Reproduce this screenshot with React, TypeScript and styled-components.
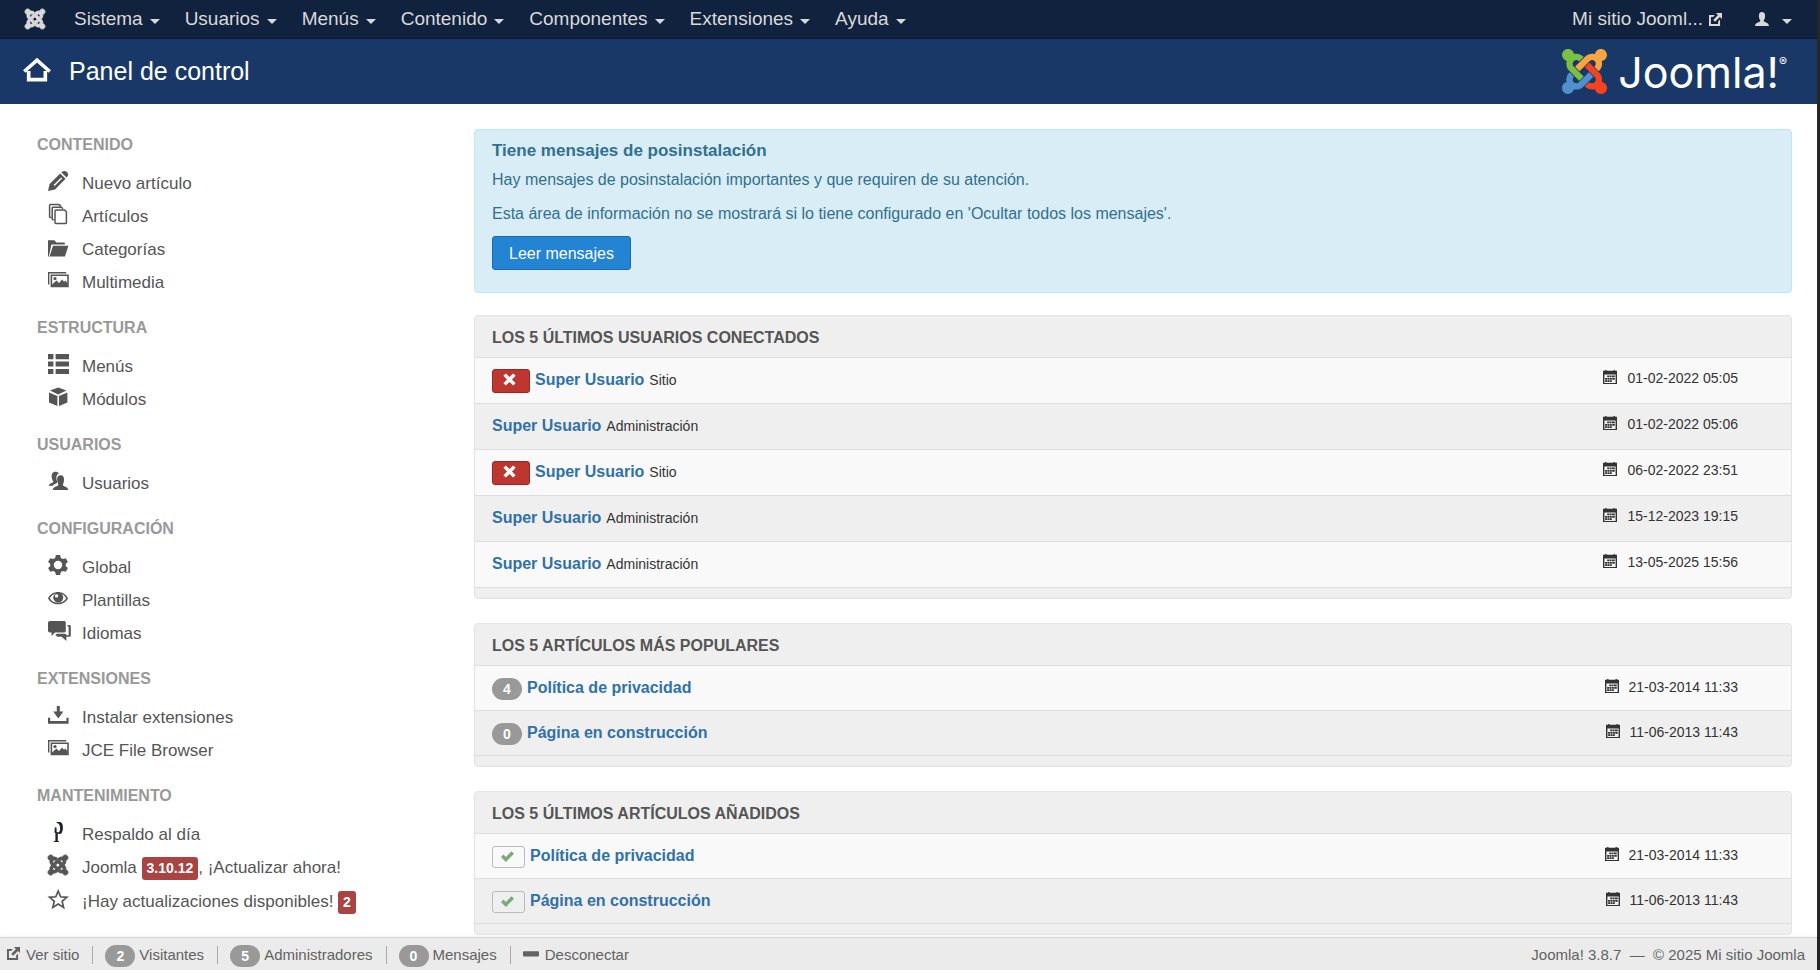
import React from "react";
import styled, { createGlobalStyle, css } from "styled-components";

const GlobalStyle = createGlobalStyle`
  *, *::before, *::after { box-sizing: border-box; }
  body {
    margin: 0;
    background: #fff;
    color: #333;
    font-family: "Liberation Sans", Arial, sans-serif;
    font-size: 16px;
    line-height: 22px;
  }
  a { text-decoration: none; }
  ul { list-style: none; margin: 0; padding: 0; }
`;

/* ---------- icons ---------- */

type IconName =
  | "pencil" | "copies" | "folder" | "images" | "list" | "cube" | "users" | "cog" | "eye"
  | "comments" | "download" | "akeeba" | "joomla" | "star" | "external" | "user" | "home"
  | "calendar" | "cross" | "check" | "minus";

const joomlaArms = {
  green:
    "M.6 92.1C.6 58.8 27.4 32 60.4 32c30 0 54.5 21.9 59.2 50.2 32.6-7.6 67.1.6 96.5 30l-44.3 44.3c-20.5-20.5-42.6-16.3-55.4-3.5-14.3 14.3-14.3 37.9 0 52.2l99.5 99.5-44 44.3c-87.7-87.2-49.7-49.7-99.8-99.7-26.8-26.5-35-64.8-24.8-98.9C20.4 144.6.6 120.7.6 92.1z",
  orange:
    "M130.1 208.5l44.3 44.3c10-10 89.7-89.7 99.7-99.8 14.3-14.3 37.6-14.3 51.9 0 12.8 12.8 17 35-3.5 55.4l44 44.3c31.2-31.2 38.5-67.6 28.9-101.2 29.2-4.1 51.9-29.2 51.9-59.5 0-33.2-26.8-60.1-59.8-60.1-30.3 0-55.4 22.5-59.5 51.6-33.8-9.9-71.7-1.5-98.3 25.1-18.3 19.1-71.1 71.5-99.6 99.9z",
  red:
    "M396.4 360.7c8.2-32.7-.9-68.5-26.3-93.9-11.8-12.2 5 4.7-99.5-99.7l-44.3 44.3 99.7 99.7c14.3 14.3 14.3 37.6 0 51.9-12.8 12.8-35 17-55.4-3.5l-44 44.3c27.6 30.2 68 38.8 102.7 28 5.5 27.4 29.7 48.1 58.9 48.1 33 0 59.8-26.8 59.8-60.1 0-30.2-22.5-55-51.6-59.1z",
  blue:
    "M312.1 307.6l-44-44.3c-87 86.4-50.4 50.4-99.7 99.8-14.3 14.3-37.6 14.3-51.9 0-13.1-13.4-16.9-35.3 3.2-55.4l-44-44.3c-30.2 30.2-38 65.2-29.5 98.3-26.7 6-46.2 29.9-46.2 58.2C0 453.2 26.8 480 59.8 480c28.6 0 52.5-19.8 58.6-46.7 32.7 8.2 68.5-.6 94.2-26 32.1-32 12.2-12.4 99.5-99.7z",
};

const Svg = styled.svg<{ $size: number }>`
  display: block;
  flex: none;
  width: ${(p) => p.$size}px;
  height: ${(p) => p.$size}px;
  fill: currentColor;
  overflow: visible;
`;

const shapes: Record<Exclude<IconName, "joomla">, React.ReactNode> = {
  pencil: (
    <>
      <path
        fillRule="evenodd"
        d="M0 20 L1.6 13 L12.2 2.4 L17.6 7.8 L7 18.4 Z M5.6 14 L6.6 15 L14.2 7.4 L13.2 6.4 Z"
      />
      <path d="M13.4 1.4 L14.4 .6 C16 -.6 17.6 -.2 18.9 1.1 C20.2 2.4 20.8 4.2 19.4 5.6 L18.6 6.6 Z" />
    </>
  ),
  copies: (
    <g fill="none" stroke="currentColor" strokeWidth="1.5">
      <path d="M3.4 13.4 H2.4 Q1.6 13.4 1.6 12.6 V1.4 Q1.6 .6 2.4 .6 H11 L13 2.4" />
      <path d="M5.8 15.8 H5 Q4.2 15.8 4.2 15 V4 Q4.2 3.2 5 3.2 H13.4 L15 4.8" />
      <path d="M8 6 H16.6 L18.4 7.8 V18.6 Q18.4 19.4 17.6 19.4 H7.8 Q7 19.4 7 18.6 V7 Q7 6 8 6 Z" />
    </g>
  ),
  folder: (
    <>
      <path d="M0 19.4 V3.2 H6.4 L8.4 5.4 H16.8 V7.4 H3.4 L.9 19.4 Z" />
      <path d="M1.6 19.4 L5 8.8 H20.4 L17 19.4 Z" />
    </>
  ),
  images: (
    <>
      <path d="M0 2 H18.2 V3.4 H1.4 V14.6 H0 Z" />
      <path fillRule="evenodd" d="M2.6 4.6 H20.8 V17.2 H2.6 Z M4.2 6.1 V15.6 H19.2 V6.1 Z" />
      <path d="M4 16 V14.6 L8.4 10.6 L11 13 L14.2 9.4 L16 11.8 L17.4 10.6 L19.6 13.2 V16.4 Z" />
      <circle cx="7" cy="8.6" r="1.6" />
    </>
  ),
  list: (
    <path d="M0 0 H5.4 V5.2 H0 Z M7.6 0 H21 V5.2 H7.6 Z M0 7.6 H5.4 V12.6 H0 Z M7.6 7.6 H21 V12.6 H7.6 Z M0 15 H5.4 V20 H0 Z M7.6 15 H21 V20 H7.6 Z" />
  ),
  cube: (
    <path d="M10.2 .6 L18.4 3.6 L10.2 7.6 L2 3.6 Z M1 5.4 L9.4 9 V19 L1 15.4 Z M19.4 5.4 L11 9 V19 L19.4 15.4 Z" />
  ),
  users: (
    <>
      <path d="M.6 14.8 C1 12 5.2 12 5.4 10.4 C3.4 8.2 3.2 4.6 4.2 2.6 C5.2 .4 9.4 .2 10.8 2.4 C8.4 3.4 8 6.6 8.8 9.4 C9.2 10.6 9.4 11.4 8.6 12.2 L5.4 13.8 L5 14.8 Z" />
      <path d="M4.8 19 C5 15.6 9.6 15.6 10.4 14 C10.4 13 9.4 12 9.2 9.6 C8.8 6.4 10 4.2 12.6 4.2 C15.2 4.2 16.4 6.2 16 9.4 C15.8 12 14.8 13 14.8 14 C15.4 15.6 20 15.6 20.2 19 Z" />
    </>
  ),
  cog: (
    <path
      fillRule="evenodd"
      d="M7.9 0 H12.1 L12.8 2.9 L14.9 4.1 L17.8 3.2 L19.9 6.9 L17.8 8.8 V11.2 L19.9 13.1 L17.8 16.8 L14.9 15.9 L12.8 17.1 L12.1 20 H7.9 L7.2 17.1 L5.1 15.9 L2.2 16.8 L.1 13.1 L2.2 11.2 V8.8 L.1 6.9 L2.2 3.2 L5.1 4.1 L7.2 2.9 Z M10 5.8 A4.2 4.2 0 1 0 10 14.2 A4.2 4.2 0 1 0 10 5.8 Z"
    />
  ),
  eye: (
    <>
      <path
        fillRule="evenodd"
        d="M0 10.2 C4 2 16 2 20 10.2 C16 18.2 4 18.2 0 10.2 Z M1.8 10.2 C5 16.2 15 16.2 18.2 10.2 C16.8 8 15.4 6.8 14 6 C9 5 6 6 5.8 6.2 C4.4 7 3 8.2 1.8 10.2 Z"
      />
      <path fillRule="evenodd" d="M10.2 4.6 A5 5 0 1 0 10.3 4.6 Z M8.6 6.2 A1.7 1.7 0 1 1 8.5 6.2 Z" />
    </>
  ),
  comments: (
    <>
      <path d="M2 0 H16.2 Q17.8 0 17.8 1.6 V10 Q17.8 11.4 16.2 11.4 H7 L3.6 15 V11.4 H2 Q0 11.4 0 10 V1.6 Q0 0 2 0 Z" />
      <path d="M19.6 4 H21.4 Q22.8 4 22.8 5.4 V14.4 Q22.8 15.8 21.4 15.8 H18.4 V20 L13.6 15.8 H9.4 L7.4 14 L8.8 12.8 H17.4 L18.8 14.2 H20.6 V5.6 H19.6 Z" />
    </>
  ),
  download: (
    <>
      <path d="M8.8 1 H11.8 V6.6 H15.4 L10.3 13.4 L5.2 6.6 H8.8 Z" />
      <path d="M0 12.8 H2.2 V16 H18.4 V12.8 H20.6 V18.8 H0 Z" />
    </>
  ),
  akeeba: (
    <g fill="#20242a">
      <path d="M8.6 0 H12 C15.4 .4 15.6 7 14 10.4 C13 12.2 11 12.4 9.8 11.6 V18.8 L11.2 19.4 V20 H5.6 V19.4 L7.4 18.8 V11 L6.4 10.6 L6.8 6 C7.2 5 8.4 5.2 8.6 6.2 V10 C10.4 10.8 11.6 10.2 12 8 C12.4 4.6 11.8 1.8 8.6 .8 Z" />
    </g>
  ),
  star: (
    <path
      fill="none"
      stroke="currentColor"
      strokeWidth="1.7"
      d="M10.2 2 L12.6 7.8 L18.8 8.3 L14.1 12.3 L15.6 18.4 L10.2 15.1 L4.8 18.4 L6.3 12.3 L1.6 8.3 L7.8 7.8 Z"
    />
  ),
  external: (
    <>
      <path d="M0 3.2 H9 L6.4 6 H3 V17 H14 V13 L17 10 V20 H0 Z" />
      <path d="M10.6 0 H20 V9.4 L16.8 6.2 L9.4 13.6 L6.4 10.6 L13.8 3.2 Z" />
    </>
  ),
  user: (
    <path d="M0 20 C0 15 6.6 14.8 7.6 12.8 C7.6 11.6 6 10.2 5.6 6.8 C5.2 2.6 6.8 0 10 0 C13.2 0 14.8 2.6 14.4 6.8 C14 10.2 12.4 11.6 12.4 12.8 C13.4 14.8 20 15 20 20 Z" />
  ),
  home: (
    <g fill="none" stroke="currentColor" strokeWidth="2.8">
      <path d="M.2 10.4 L10 1.6 L19.8 10.4" />
      <path d="M3.6 10 V16.6 H16.4 V10" />
    </g>
  ),
  calendar: (
    <path
      fillRule="evenodd"
      d="M0 1 H3 V0 H5 V1 H15 V0 H17 V1 H20 V20 H0 Z M2 6.4 V18.4 H18 V6.4 Z M6 8 H8.8 V10.4 H6 Z M9.4 8 H12.2 V10.4 H9.4 Z M12.8 8 H16.8 V10.4 H12.8 Z M3 11.4 H5.8 V13.8 H3 Z M6.4 11.4 H9.2 V13.8 H6.4 Z M9.8 11.4 H12.6 V13.8 H9.8 Z M13.2 11.4 H16.8 V13.8 H13.2 Z M3 14.8 H5.8 V17.2 H3 Z M6.4 14.8 H9.2 V17.2 H6.4 Z M9.8 14.8 H12.6 V17.2 H9.8 Z"
    />
  ),
  cross: (
    <path d="M4.4 .6 L10 6.2 L15.6 .6 L19.4 4.4 L13.8 10 L19.4 15.6 L15.6 19.4 L10 13.8 L4.4 19.4 L.6 15.6 L6.2 10 L.6 4.4 Z" />
  ),
  check: <path d="M0 10.6 L3.8 6.8 L7.6 10.6 L16.2 2 L20 5.8 L7.6 18.4 Z" />,
  minus: <rect x="0" y="6.6" width="20" height="6.4" rx="1" />,
};

function Icon({ name, size = 20 }: { name: IconName; size?: number }) {
  if (name === "joomla") {
    return (
      <Svg $size={size} viewBox="0 32 448 448" aria-hidden="true" stroke="currentColor" strokeWidth="22">
        {Object.values(joomlaArms).map((d) => (
          <path key={d} d={d} />
        ))}
      </Svg>
    );
  }
  return (
    <Svg $size={size} viewBox="0 0 20 20" aria-hidden="true">
      {shapes[name]}
    </Svg>
  );
}

/* ---------- frame ---------- */

const Shell = styled.div`
  display: flex;
  flex-direction: column;
  height: 100vh;
  border-right: 3px solid #262626;
`;

const TopBar = styled.nav`
  display: flex;
  align-items: center;
  flex: none;
  height: 39px;
  padding: 0 12px 0 25px;
  background: #10223e;
  border-bottom: 1px solid #0c192e;
  color: #d9d9d9;
  font-size: 19px;
`;

const Brand = styled.a`
  color: inherit;
  margin-right: 17px;
`;

const MenuButton = styled.button<{ $gap?: number }>`
  display: flex;
  align-items: center;
  gap: ${(p) => p.$gap ?? 7}px;
  height: 38px;
  padding: 0 13px 0 12px;
  border: 0;
  background: none;
  color: inherit;
  font: inherit;
`;

const Caret = styled.span`
  margin-top: 4px;
  border: 5px solid transparent;
  border-top-color: currentColor;
  border-bottom: 0;
`;

const SiteLink = styled.a`
  display: flex;
  align-items: center;
  gap: 6px;
  margin-left: auto;
  padding-right: 21px;
  color: inherit;
`;

const Header = styled.header`
  display: flex;
  align-items: center;
  justify-content: space-between;
  flex: none;
  height: 65px;
  padding: 0 30px 0 24px;
  background: #1a3867;
  color: #fff;
`;

const PageTitle = styled.h1`
  display: flex;
  align-items: center;
  gap: 19px;
  margin: 0;
  padding-bottom: 1px;
  font-size: 25px;
  font-weight: 400;
  line-height: 30px;
`;

const Logo = styled.div`
  display: flex;
  align-items: center;
  gap: 11px;
`;

const WordMark = styled.span`
  display: flex;
  font-family: Inter, sans-serif;
  font-size: 43px;
  font-weight: 400;
  line-height: 44px;
`;

const Registered = styled.sup`
  font-size: 12px;
  line-height: 24px;
`;

const Content = styled.div`
  display: flex;
  flex: 1;
  min-height: 0;
  gap: 37px;
  padding: 25px 25px 0;
  overflow-y: auto;
  scrollbar-width: none;
`;

/* ---------- sidebar ---------- */

const Sidebar = styled.aside`
  flex: 0 0 412px;
  padding: 6px 0 0 12px;
`;

const Group = styled.section`
  margin-bottom: 19px;
`;

const GroupTitle = styled.h2`
  margin: 0 0 12px;
  color: #999;
  font-size: 16px;
  line-height: 20px;
  text-transform: uppercase;
`;

const SideLink = styled.a`
  display: flex;
  align-items: center;
  gap: 14px;
  min-height: 33px;
  padding-left: 11px;
  color: #555;
  font-size: 17px;
  white-space: nowrap;

  svg { margin-bottom: 6px; }
`;

const Label = styled.span`
  display: inline-block;
  margin: 6px 0 5px;
  padding: 0 5px;
  border-radius: 3px;
  background: #a94442;
  color: #fff;
  font-size: 14px;
  font-weight: 700;
  line-height: 23px;
`;

/* ---------- main column ---------- */

const Main = styled.main`
  flex: 1;
  min-width: 0;
`;

const Alert = styled.section`
  margin-bottom: 22px;
  padding: 10px 17px 22px;
  border: 1px solid #bce8f1;
  border-radius: 4px;
  background: #d9edf7;
  color: #31708f;
`;

const AlertTitle = styled.h2`
  margin: 0 0 7px;
  font-size: 17px;
  line-height: 22px;
`;

const AlertText = styled.p`
  margin: 0 0 12px;

  &:last-of-type { margin-bottom: 11px; }
`;

const PrimaryButton = styled.button`
  display: block;
  height: 34px;
  padding: 1px 16px 0;
  border: 1px solid #1c6ab0;
  border-radius: 3px;
  background: #2384d3;
  color: #fff;
  font: inherit;
`;

const Panel = styled.section`
  margin-bottom: 24px;
  padding-bottom: 10px;
  border: 1px solid #e3e3e3;
  border-radius: 4px;
  background: #efefef;
`;

const PanelTitle = styled.h2`
  margin: 0;
  padding: 2px 17px 0;
  color: #555;
  font-size: 16px;
  line-height: 39px;
  text-transform: uppercase;
`;

const Row = styled.li`
  display: flex;
  align-items: center;
  gap: 5px;
  height: 45px;
  padding: 0 53px 0 17px;
  border-top: 1px solid #ddd;

  &:nth-child(odd) { background: #f9f9f9; }
`;

const Rows = styled.ul<{ $tall?: boolean }>`
  border-bottom: 1px solid #ddd;

  ${(p) =>
    p.$tall &&
    css`
      ${Row} {
        height: 46px;
        padding-bottom: 2px;
      }
    `}
`;

const RowLink = styled.a`
  color: #3071a9;
  font-weight: 700;
`;

const Small = styled.small`
  font-size: 14px;
`;

const Stamp = styled.time`
  display: flex;
  align-items: center;
  gap: 10px;
  margin-left: auto;
  padding-bottom: 3px;
  font-size: 14px;

  svg { margin-bottom: 2px; }
`;

const StateButton = styled.button<{ $danger?: boolean }>`
  display: flex;
  align-items: center;
  justify-content: center;
  flex: none;
  width: 33px;
  height: 22px;
  margin-top: 2px;
  padding: 0 2px 1px 0;
  border: 1px solid #bbb;
  border-radius: 3px;
  background: transparent;
  color: #7aac7a;

  ${(p) =>
    p.$danger &&
    css`
      width: 38px;
      height: 24px;
      padding: 0 3px 2px 0;
      border-color: #942a25;
      background: #bd362f;
      color: #fff;
      box-shadow: 0 1px 2px rgba(0, 0, 0, 0.05);
    `}
`;

const Badge = styled.span`
  display: inline-block;
  flex: none;
  min-width: 30px;
  margin-top: 2px;
  border-radius: 11px;
  background: #999;
  color: #fff;
  font-size: 14px;
  font-weight: 700;
  line-height: 22px;
  text-align: center;
`;

/* ---------- status bar ---------- */

const StatusBar = styled.footer`
  display: flex;
  align-items: center;
  flex: none;
  height: 33px;
  padding: 2px 12px 0 7px;
  border-top: 1px solid #d4d4d4;
  background: #ebebeb;
  box-shadow: 0 0 3px rgba(0, 0, 0, 0.1);
  color: #626262;
  font-size: 15px;
  z-index: 1;
`;

const StatusItem = styled.div`
  display: flex;
  align-items: center;
  gap: 4px;

  & + &::before {
    content: "";
    width: 1px;
    height: 18px;
    margin: 0 8px 0 13px;
    background: #aaa;
  }
`;

const StatusLink = styled.a`
  display: flex;
  align-items: center;
  gap: 6px;
  color: inherit;

  svg { margin-bottom: 3px; }
`;

const Copyright = styled.p`
  margin: 0 0 0 auto;
  white-space: pre;
`;

/* ---------- data ---------- */

const menus = ["Sistema", "Usuarios", "Menús", "Contenido", "Componentes", "Extensiones", "Ayuda"];

const groups: { title: string; items: { icon: IconName; text: React.ReactNode }[] }[] = [
  {
    title: "Contenido",
    items: [
      { icon: "pencil", text: "Nuevo artículo" },
      { icon: "copies", text: "Artículos" },
      { icon: "folder", text: "Categorías" },
      { icon: "images", text: "Multimedia" },
    ],
  },
  {
    title: "Estructura",
    items: [
      { icon: "list", text: "Menús" },
      { icon: "cube", text: "Módulos" },
    ],
  },
  { title: "Usuarios", items: [{ icon: "users", text: "Usuarios" }] },
  {
    title: "Configuración",
    items: [
      { icon: "cog", text: "Global" },
      { icon: "eye", text: "Plantillas" },
      { icon: "comments", text: "Idiomas" },
    ],
  },
  {
    title: "Extensiones",
    items: [
      { icon: "download", text: "Instalar extensiones" },
      { icon: "images", text: "JCE File Browser" },
    ],
  },
  {
    title: "Mantenimiento",
    items: [
      { icon: "akeeba", text: "Respaldo al día" },
      { icon: "joomla", text: <>Joomla <Label>3.10.12</Label>, ¡Actualizar ahora!</> },
      { icon: "star", text: <>¡Hay actualizaciones disponibles! <Label>2</Label></> },
    ],
  },
];

const logins = [
  { place: "Sitio", date: "01-02-2022 05:05" },
  { place: "Administración", date: "01-02-2022 05:06" },
  { place: "Sitio", date: "06-02-2022 23:51" },
  { place: "Administración", date: "15-12-2023 19:15" },
  { place: "Administración", date: "13-05-2025 15:56" },
];

const articles = [
  { title: "Política de privacidad", hits: 4, date: "21-03-2014 11:33" },
  { title: "Página en construcción", hits: 0, date: "11-06-2013 11:43" },
];

const counters = [
  { count: 2, text: "Visitantes" },
  { count: 5, text: "Administradores" },
  { count: 0, text: "Mensajes" },
];

function DateStamp({ value }: { value: string }) {
  return (
    <Stamp>
      <Icon name="calendar" size={14} />
      {value}
    </Stamp>
  );
}

export default function App() {
  return (
    <Shell>
      <GlobalStyle />
      <TopBar aria-label="Principal">
        <Brand href="#" aria-label="Joomla">
          <Icon name="joomla" size={20} />
        </Brand>
        {menus.map((menu) => (
          <MenuButton key={menu} type="button">
            {menu}
            <Caret />
          </MenuButton>
        ))}
        <SiteLink href="#">
          Mi sitio Jooml...
          <Icon name="external" size={13} />
        </SiteLink>
        <MenuButton type="button" $gap={13} aria-label="Usuario">
          <Icon name="user" size={14} />
          <Caret />
        </MenuButton>
      </TopBar>

      <Header>
        <PageTitle>
          <Icon name="home" size={26} />
          Panel de control
        </PageTitle>
        <Logo>
          <Svg $size={45} viewBox="0 32 448 448" aria-hidden="true">
            <path d={joomlaArms.green} fill="#7ac143" />
            <path d={joomlaArms.orange} fill="#f9a541" />
            <path d={joomlaArms.red} fill="#f44321" />
            <path d={joomlaArms.blue} fill="#5091cd" />
          </Svg>
          <WordMark>
            Joomla!<Registered>®</Registered>
          </WordMark>
        </Logo>
      </Header>

      <Content>
        <Sidebar>
          {groups.map((group) => (
            <Group key={group.title}>
              <GroupTitle>{group.title}</GroupTitle>
              <ul>
                {group.items.map((item, i) => (
                  <li key={i}>
                    <SideLink href="#">
                      <Icon name={item.icon} />
                      <span>{item.text}</span>
                    </SideLink>
                  </li>
                ))}
              </ul>
            </Group>
          ))}
        </Sidebar>

        <Main>
          <Alert>
            <AlertTitle>Tiene mensajes de posinstalación</AlertTitle>
            <AlertText>Hay mensajes de posinstalación importantes y que requiren de su atención.</AlertText>
            <AlertText>
              Esta área de información no se mostrará si lo tiene configurado en 'Ocultar todos los mensajes'.
            </AlertText>
            <PrimaryButton type="button">Leer mensajes</PrimaryButton>
          </Alert>

          <Panel>
            <PanelTitle>Los 5 últimos usuarios conectados</PanelTitle>
            <Rows $tall>
              {logins.map((login) => (
                <Row key={login.date}>
                  {login.place === "Sitio" && (
                    <StateButton type="button" $danger aria-label="Desconectar usuario">
                      <Icon name="cross" size={13} />
                    </StateButton>
                  )}
                  <RowLink href="#">Super Usuario</RowLink>
                  <Small>{login.place}</Small>
                  <DateStamp value={login.date} />
                </Row>
              ))}
            </Rows>
          </Panel>

          <Panel>
            <PanelTitle>Los 5 artículos más populares</PanelTitle>
            <Rows>
              {articles.map((article) => (
                <Row key={article.title}>
                  <Badge>{article.hits}</Badge>
                  <RowLink href="#">{article.title}</RowLink>
                  <DateStamp value={article.date} />
                </Row>
              ))}
            </Rows>
          </Panel>

          <Panel>
            <PanelTitle>Los 5 últimos artículos añadidos</PanelTitle>
            <Rows>
              {articles.map((article) => (
                <Row key={article.title}>
                  <StateButton type="button" aria-label="Publicado">
                    <Icon name="check" size={13} />
                  </StateButton>
                  <RowLink href="#">{article.title}</RowLink>
                  <DateStamp value={article.date} />
                </Row>
              ))}
            </Rows>
          </Panel>
        </Main>
      </Content>

      <StatusBar>
        <StatusItem>
          <StatusLink href="#">
            <Icon name="external" size={13} />
            Ver sitio
          </StatusLink>
        </StatusItem>
        {counters.map((counter) => (
          <StatusItem key={counter.text}>
            <Badge>{counter.count}</Badge>
            {counter.text}
          </StatusItem>
        ))}
        <StatusItem>
          <StatusLink href="#">
            <Icon name="minus" size={16} />
            Desconectar
          </StatusLink>
        </StatusItem>
        <Copyright>Joomla! 3.8.7  —  © 2025 Mi sitio Joomla</Copyright>
      </StatusBar>
    </Shell>
  );
}
